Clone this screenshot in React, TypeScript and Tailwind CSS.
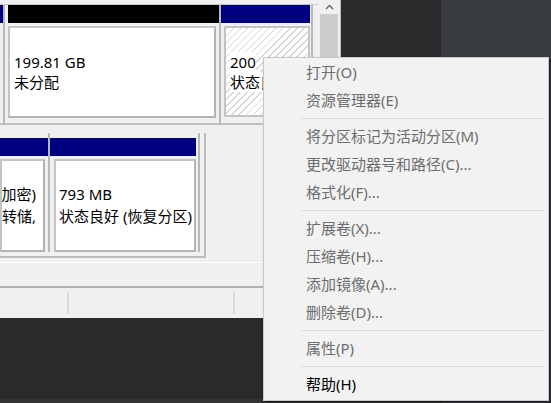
import React from "react";

const font = "font-['Noto_Sans','Noto_Sans_CJK_SC',sans-serif]";

type Item = { label: string; enabled?: boolean } | "sep";

const items: Item[] = [
  { label: "打开(O)" },
  { label: "资源管理器(E)" },
  "sep",
  { label: "将分区标记为活动分区(M)" },
  { label: "更改驱动器号和路径(C)..." },
  { label: "格式化(F)..." },
  "sep",
  { label: "扩展卷(X)..." },
  { label: "压缩卷(H)..." },
  { label: "添加镜像(A)..." },
  { label: "删除卷(D)..." },
  "sep",
  { label: "属性(P)" },
  "sep",
  { label: "帮助(H)", enabled: true },
];

function ContextMenu() {
  return (
    <div
      className={`absolute left-[263px] top-[57px] w-[286px] h-[344px] bg-[#f2f2f2] border border-[#c8c8c8] shadow-[2px_2px_3px_rgba(0,0,0,0.45)] ${font}`}
    >
      {items.map((it, i) =>
        it === "sep" ? (
          <div key={i} className="h-[8px] flex items-center pl-[38px] pr-[4px]">
            <div className="h-px w-full bg-[#d9d9d9]" />
          </div>
        ) : (
          <div
            key={i}
            className={`h-[28px] flex items-center pl-[42px] text-[15px] leading-none ${
              it.enabled ? "text-black" : "text-[#6d6d6d]"
            }`}
          >
            {it.label}
          </div>
        )
      )}
    </div>
  );
}

function WhiteBox({ children, className = "" }: { children?: React.ReactNode; className?: string }) {
  return (
    <div
      className={`bg-white border-t-2 border-l-2 border-t-[#c4c4c4] border-l-[#c4c4c4] border-b-2 border-r-2 border-b-[#b4b4b4] border-r-[#b4b4b4] flex flex-col justify-center ${className}`}
    >
      {children}
    </div>
  );
}

function Window() {
  return (
    <div className={`w-[341px] h-[318px] bg-[#f0f0f0] border-r border-[#bdbdbd] flex flex-col ${font} text-black text-[15px]`}>
      <div className="flex h-[263px]">
        {/* content pane */}
        <div className="w-[318px] flex flex-col">
          <div className="h-[5px] border-b border-[#c8c8c8]" />
          {/* row 1 */}
          <div className="flex h-[120px] border-b-2 border-[#bcbcbc]">
            <div className="w-[3px] flex flex-col">
              <div className="h-[18px] bg-[#000080]" />
            </div>
            <div className="w-[218px] border-x-2 border-[#b8b8b8] flex flex-col px-[3px]">
              <div className="h-[18px] bg-black -mx-[3px] ml-0" />
              <WhiteBox className="mt-[3px] h-[92px] pl-[4px] leading-5">
                <div>199.81 GB</div>
                <div>未分配</div>
              </WhiteBox>
            </div>
            <div className="w-[92px] border-r-2 border-[#b8b8b8] flex flex-col pl-[3px] pr-[1px]">
              <div className="h-[18px] bg-[#000080] -ml-[3px]" />
              <div className="mt-[3px] h-[91px] border-2 border-[#c4c4c4] bg-[repeating-linear-gradient(135deg,#d6d6d6_0px,#d6d6d6_1px,#ffffff_1px,#ffffff_5px)] flex flex-col justify-center pl-[4px] leading-5 overflow-hidden whitespace-nowrap">
                <div><span className="bg-white">200</span></div>
                <div><span className="bg-white">状态良好</span></div>
              </div>
            </div>
          </div>
          <div className="h-[8px]" />
          {/* row 2 */}
          <div className="flex h-[125px]">
            <div className="w-[206px] flex border-r-2 border-b-2 border-[#bcbcbc] pr-[5px] pb-[4px]">
              <div className="w-[50px] border-r-2 border-[#b8b8b8] flex flex-col">
                <div className="h-[18px] bg-[#000080] mt-[5px]" />
                <WhiteBox className="mt-[3px] h-[94px] mr-[3px] items-end pr-[7px] leading-[22px] overflow-hidden whitespace-nowrap">
                  <div>(BitLocker 已加密)</div>
                  <div>页面文件, 故障转储,</div>
                </WhiteBox>
              </div>
              <div className="w-[150px] border-r-2 border-[#b8b8b8] flex flex-col pl-[4px] pr-[2px]">
                <div className="h-[18px] bg-[#000080] mt-[5px] -ml-[4px]" />
                <WhiteBox className="mt-[3px] h-[94px] pl-[3px] pr-[4px] leading-[22px] overflow-hidden whitespace-nowrap">
                  <div>793 MB</div>
                  <div>状态良好 (恢复分区)</div>
                </WhiteBox>
              </div>
            </div>
          </div>
          <div className="flex-1 border-b border-white" />
        </div>
        {/* scrollbar */}
        <div className="w-[22px] flex flex-col items-center">
          <div className="h-[14px] flex items-center justify-center text-[#606060]">
            <svg width="9" height="6" viewBox="0 0 9 6">
              <path d="M1 5 L4.5 1.5 L8 5" fill="none" stroke="#606060" strokeWidth="1.3" />
            </svg>
          </div>
          <div className="w-[18px] flex-1 bg-[#cdcdcd]" />
        </div>
      </div>
      <div className="h-[23px]" />
      {/* status bar */}
      <div className="flex-1 border-t-2 border-[#b0b0b0] flex">
        <div className="w-[67px]" />
        <div className="w-[2px] my-[4px] bg-[#dadada]" />
        <div className="w-[164px]" />
        <div className="w-[2px] my-[4px] bg-[#dadada]" />
        <div className="flex-1" />
      </div>
    </div>
  );
}

export default function App() {
  return (
    <div className="relative w-[551px] h-[403px] overflow-hidden bg-[#2a2a2a] flex">
      <div className="w-[441px] flex flex-col">
        <div className="flex">
          <Window />
          <div className="flex-1 bg-[#2b2b2b]" />
        </div>
        <div className="flex-1 bg-[#2a2a2a] border-b-4 border-[#333333]" />
      </div>
      <div className="flex-1 bg-[#383b3f]" />
      <ContextMenu />
    </div>
  );
}
